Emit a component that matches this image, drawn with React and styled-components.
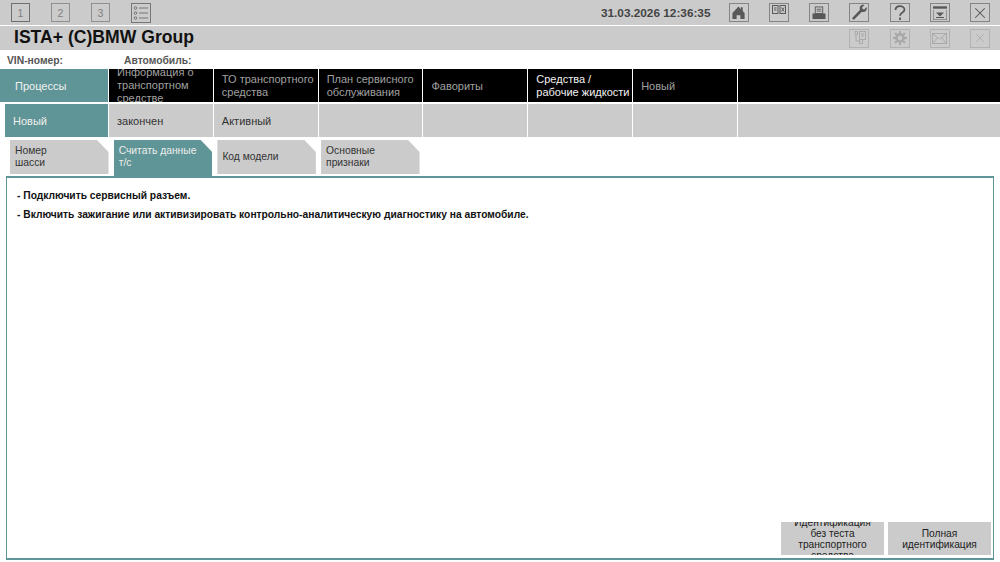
import styled, { createGlobalStyle } from 'styled-components';
import { X } from 'lucide-react';

const GlobalStyle = createGlobalStyle`
  html, body {
    margin: 0;
    padding: 0;
    background: #fff;
    overflow: hidden;
  }
  * {
    box-sizing: border-box;
  }
  body {
    font-family: "Liberation Sans", Arial, sans-serif;
  }
`;

const Page = styled.div`
  width: 1000px;
  height: 562px;
  display: flex;
  flex-direction: column;
  background: #fff;
`;

const TopBar = styled.div`
  height: 25px;
  flex: none;
  background: #cbcbcb;
  display: flex;
  align-items: center;
  padding: 0 10px 0 11px;
  margin-bottom: 1px;
`;

const StepGroup = styled.div`
  display: flex;
  align-items: center;
  gap: 21px;
`;

const StepBox = styled.div`
  width: 19px;
  height: 19px;
  border: 1px solid ${({ $active }) => ($active ? '#6f6f6f' : '#8f8f8f')};
  color: #808080;
  font-size: 10.5px;
  display: flex;
  align-items: center;
  justify-content: center;
`;

const Clock = styled.div`
  margin-left: auto;
  margin-right: 18px;
  color: #444;
  font-size: 11.8px;
  font-weight: 700;
  white-space: nowrap;
`;

const IconRow = styled.div`
  display: flex;
  align-items: center;
  gap: 20.25px;
`;

const IconBox = styled.div`
  width: 20px;
  height: 19px;
  flex: none;
  border: 1px solid ${({ $dim }) => ($dim ? '#b2b2b2' : '#858585')};
  color: ${({ $dim }) => ($dim ? '#a9a9a9' : '#585858')};
  display: flex;
  align-items: center;
  justify-content: center;
`;

const TitleBar = styled.div`
  height: 24px;
  flex: none;
  background: #cbcbcb;
  display: flex;
  align-items: center;
  padding: 0 10px 0 14px;
`;

const Title = styled.div`
  font-size: 17.6px;
  font-weight: 700;
  color: #111;
  margin-right: auto;
  margin-top: -2px;
`;

const VehicleRow = styled.div`
  height: 19px;
  flex: none;
  display: flex;
  align-items: center;
  padding: 1px 0 0 7px;
  font-size: 10.3px;
  font-weight: 700;
  color: #555;
`;

const VehicleLabel = styled.span`
  width: ${({ $w }) => $w}px;
`;

const NavRow = styled.div`
  height: 33px;
  flex: none;
  display: grid;
  grid-template-columns: 108px repeat(6, 103.83px) 1fr;
  column-gap: 1px;
`;

const NavItem = styled.div`
  background: ${({ $active }) => ($active ? '#5f9596' : '#000')};
  color: ${({ $active, $bright }) => ($active || $bright ? '#f2f2f2' : '#a0a0a0')};
  font-size: 11px;
  line-height: 13px;
  display: flex;
  align-items: center;
  padding-left: ${({ $active }) => ($active ? 15 : 8)}px;
  padding-top: ${({ $single }) => ($single ? 1 : 0)}px;
  overflow: hidden;
  white-space: pre-line;
`;

const StateRow = styled.div`
  height: 33px;
  flex: none;
  margin-top: 2px;
  display: grid;
  grid-template-columns: 103px repeat(6, 103.83px) 1fr;
  column-gap: 1px;
  padding-left: 5px;
`;

const StateItem = styled.div`
  background: ${({ $active }) => ($active ? '#5f9596' : '#cbcbcb')};
  color: ${({ $active }) => ($active ? '#efefef' : '#333')};
  font-size: 11px;
  display: flex;
  align-items: center;
  padding-left: 8px;
`;

const TabRow = styled.div`
  flex: none;
  height: 36px;
  margin-top: 3px;
  display: flex;
  align-items: flex-start;
  gap: 5.2px;
  padding-left: 10px;
`;

const Tab = styled.div`
  width: 98.5px;
  height: ${({ $active }) => ($active ? 37 : 34)}px;
  flex: none;
  padding: 0 0 ${({ $active }) => ($active ? 3 : 0)}px 5px;
  background: ${({ $active }) => ($active ? '#5f9596' : '#cbcbcb')};
  color: ${({ $active }) => ($active ? '#eee' : '#333')};
  font-size: 10.3px;
  line-height: 12px;
  display: flex;
  align-items: center;
  white-space: pre-line;
  clip-path: polygon(0 0, 87px 0, 100% 12px, 100% 100%, 0 100%);
`;

const Panel = styled.div`
  flex: none;
  width: 988px;
  height: 384px;
  margin-left: 6px;
  border: 1px solid #5f9596;
  border-top-width: 2px;
  border-bottom-width: 2px;
  padding: 12px 0 8px 10px;
  display: flex;
  flex-direction: column;
`;

const Instruction = styled.p`
  margin: 0 0 7px;
  font-size: 10.25px;
  line-height: 12px;
  font-weight: 700;
  color: #111;
`;

const ActionRow = styled.div`
  margin-top: auto;
  margin-right: 2px;
  display: flex;
  justify-content: flex-end;
  gap: 4px;
  margin-bottom: -5px;
`;

const ActionButton = styled.div`
  width: 103px;
  height: 33px;
  background: #cbcbcb;
  color: #222;
  font-size: 10.2px;
  line-height: 11px;
  text-align: center;
  display: flex;
  align-items: center;
  justify-content: center;
  overflow: hidden;
  white-space: pre-line;
`;

const TaskListIcon = () => (
  <svg width="20" height="20" viewBox="0 0 20 20" fill="none" stroke="#777">
    <rect x="0.5" y="0.5" width="19" height="19" />
    <circle cx="4.5" cy="5" r="1.3" />
    <circle cx="4.5" cy="10" r="1.3" />
    <circle cx="4.5" cy="15" r="1.3" />
    <path d="M8 5h9M8 10h9M8 15h9" />
  </svg>
);

const HomeIcon = () => (
  <svg width="15" height="15" viewBox="0 0 16 16" fill="currentColor">
    <path d="M8 1.5 1.5 8.5V15h4.5v-4h4v4h4.5V8.5L12.5 6.5V2.5h-2v2z" />
  </svg>
);

const PanelsIcon = () => (
  <svg width="14" height="10" viewBox="0 0 14 10" fill="none" stroke="currentColor" style={{ marginBottom: 5 }}>
    <rect x="0.5" y="0.5" width="5.5" height="8" />
    <rect x="8" y="0.5" width="5.5" height="8" />
    <path d="M2 3h2.5M2 5h2.5" />
    <path d="M9.5 2.5l2.5 4M12 2.5l-2.5 4" />
  </svg>
);

const PrinterIcon = () => (
  <svg width="16" height="14" viewBox="0 0 16 15">
    <rect x="4" y="1" width="8" height="7" fill="none" stroke="currentColor" />
    <path d="M5.5 3.5h5M5.5 5.5h5" stroke="currentColor" />
    <path d="M1 8h14v6H1z" fill="currentColor" />
  </svg>
);

const WrenchIcon = () => (
  <svg width="17" height="17" viewBox="0 0 18 18" fill="currentColor">
    <path d="M16.5 3.2 14 5.7 12.3 5.2 11.8 3.5 14.3 1C12.4.4 10.4 1 9.6 2.7 9 3.9 9.1 5.2 9.6 6.2L1.5 14.6 1.5 16.5 3.4 16.5 11.5 8.1C12.7 8.7 14.2 8.6 15.4 7.7 16.7 6.6 17.1 4.8 16.5 3.2Z" />
  </svg>
);

const HelpIcon = () => (
  <svg width="14" height="16" viewBox="0 0 14 16" fill="none" stroke="currentColor" strokeWidth="1.8">
    <path d="M2.5 5C2.5 2.5 4.5 1.2 7 1.2S11.5 2.7 11.5 4.8C11.5 7.6 7 7.6 7 10.8" />
    <path d="M7 12.6V15" />
  </svg>
);

const TrayIcon = () => (
  <svg width="16" height="16" viewBox="0 0 16 16" fill="none">
    <path d="M1 2.5h14" stroke="currentColor" strokeWidth="2.4" />
    <path d="M1.5 5.5v9M14.5 5.5v9M1.5 14.5h13" stroke="currentColor" strokeDasharray="1 1" />
    <path d="M4 7.5h8L8 11.5z" fill="currentColor" />
    <path d="M4 12.5h8" stroke="currentColor" />
  </svg>
);

const DocTreeIcon = () => (
  <svg width="16" height="16" viewBox="0 0 16 16" fill="none" stroke="currentColor">
    <rect x="8.5" y="1.5" width="6" height="8" />
    <path d="M10 4h3M10 6h3" />
    <path d="M4 1.5h2.5v3H4zM5 4.5v6.5h3.5M8.5 9.5h3v4h-3z" />
  </svg>
);

const GearIcon = () => (
  <svg width="16" height="16" viewBox="0 0 16 16" fill="none" stroke="currentColor">
    <circle cx="8" cy="8" r="3.6" strokeWidth="2.6" />
    <path d="M8 1v2.6M8 12.4V15M1 8h2.6M12.4 8H15M3 3l1.9 1.9M11.1 11.1 13 13M13 3l-1.9 1.9M4.9 11.1 3 13" strokeWidth="2" />
  </svg>
);

const MailIcon = () => (
  <svg width="15" height="11" viewBox="0 0 15 11" fill="none" stroke="currentColor">
    <rect x="0.5" y="0.5" width="14" height="10" />
    <path d="M1 1l6.5 5L14 1M1 10l4.5-5.5M14 10 9.5 4.5" />
  </svg>
);

const navItems = [
  { label: 'Процессы', active: true, single: true },
  { label: 'Информация о\nтранспортном\nсредстве' },
  { label: 'ТО транспортного\nсредства' },
  { label: 'План сервисного\nобслуживания' },
  { label: 'Фавориты', single: true },
  { label: 'Средства /\nрабочие жидкости', bright: true },
  { label: 'Новый', single: true },
  { label: '' },
];

const stateItems = [
  { label: 'Новый', active: true },
  { label: 'закончен' },
  { label: 'Активный' },
  { label: '' },
  { label: '' },
  { label: '' },
  { label: '' },
  { label: '' },
];

const tabs = [
  { label: 'Номер\nшасси' },
  { label: 'Считать данные\nт/с', active: true },
  { label: 'Код модели' },
  { label: 'Основные\nпризнаки' },
];

const App = () => {
  return (
    <Page>
      <GlobalStyle />
      <TopBar>
        <StepGroup>
          <StepBox $active>1</StepBox>
          <StepBox>2</StepBox>
          <StepBox>3</StepBox>
          <TaskListIcon />
        </StepGroup>
        <Clock>31.03.2026 12:36:35</Clock>
        <IconRow>
          <IconBox><HomeIcon /></IconBox>
          <IconBox><PanelsIcon /></IconBox>
          <IconBox><PrinterIcon /></IconBox>
          <IconBox><WrenchIcon /></IconBox>
          <IconBox><HelpIcon /></IconBox>
          <IconBox><TrayIcon /></IconBox>
          <IconBox><X size={18} strokeWidth={1.4} /></IconBox>
        </IconRow>
      </TopBar>
      <TitleBar>
        <Title>ISTA+ (C)BMW Group</Title>
        <IconRow>
          <IconBox $dim><DocTreeIcon /></IconBox>
          <IconBox $dim><GearIcon /></IconBox>
          <IconBox $dim><MailIcon /></IconBox>
          <IconBox $dim><X size={14} strokeWidth={1.4} /></IconBox>
        </IconRow>
      </TitleBar>
      <VehicleRow>
        <VehicleLabel $w={117}>VIN-номер:</VehicleLabel>
        <VehicleLabel $w={100}>Автомобиль:</VehicleLabel>
      </VehicleRow>
      <NavRow>
        {navItems.map((item, i) => (
          <NavItem key={i} $active={item.active} $bright={item.bright} $single={item.single}>{item.label}</NavItem>
        ))}
      </NavRow>
      <StateRow>
        {stateItems.map((item, i) => (
          <StateItem key={i} $active={item.active}>{item.label}</StateItem>
        ))}
      </StateRow>
      <TabRow>
        {tabs.map((tab) => (
          <Tab key={tab.label} $active={tab.active}>{tab.label}</Tab>
        ))}
      </TabRow>
      <Panel>
        <Instruction>- Подключить сервисный разъем.</Instruction>
        <Instruction>- Включить зажигание или активизировать контрольно-аналитическую диагностику на автомобиле.</Instruction>
        <ActionRow>
          <ActionButton>{'Идентификация\nбез теста\nтранспортного\nсредства'}</ActionButton>
          <ActionButton>{'Полная\nидентификация'}</ActionButton>
        </ActionRow>
      </Panel>
    </Page>
  );
};

export default App;
